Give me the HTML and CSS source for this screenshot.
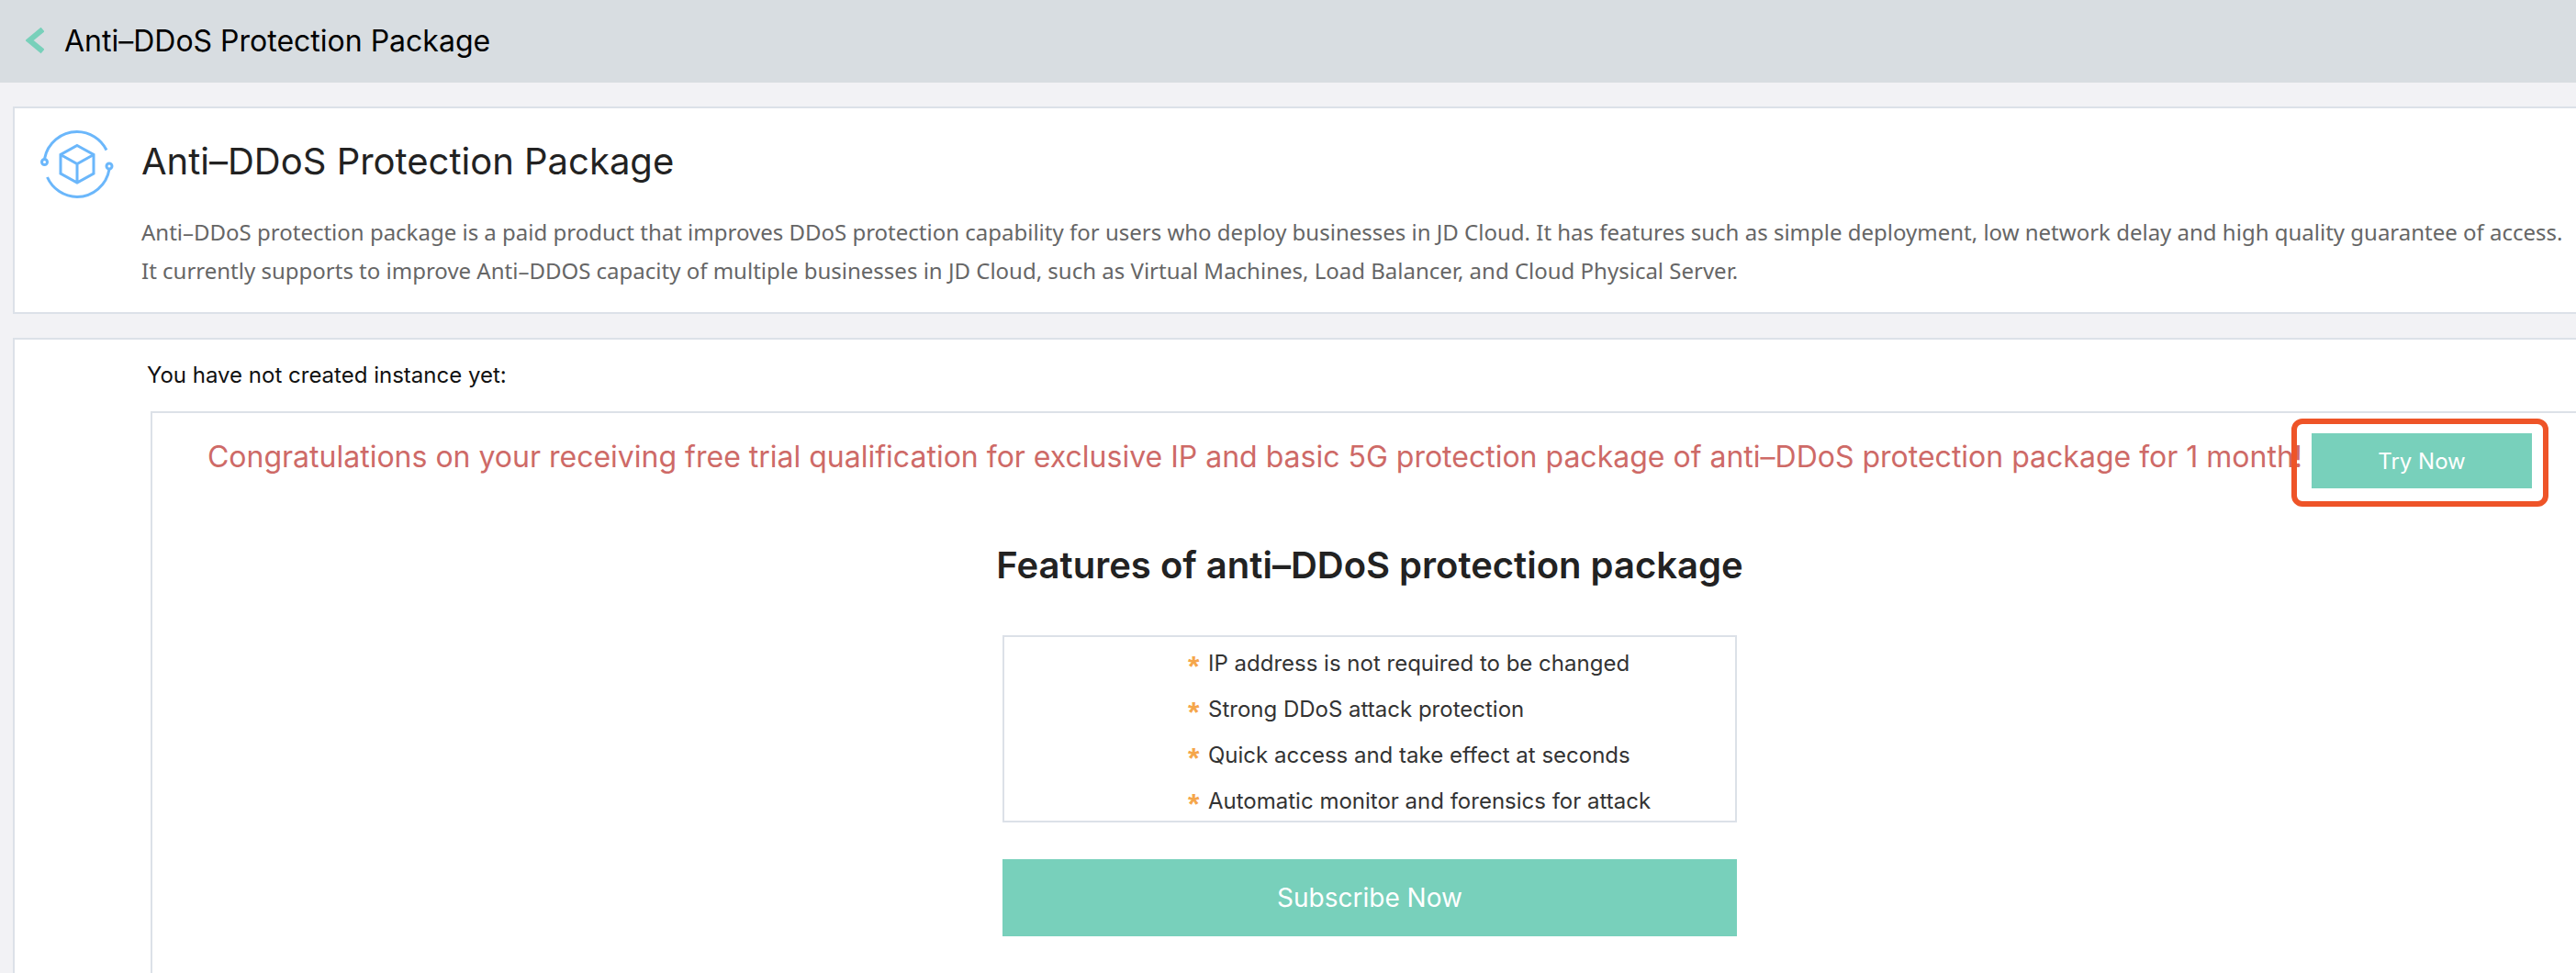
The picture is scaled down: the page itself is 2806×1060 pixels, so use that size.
FILE: index.html
```html
<!DOCTYPE html>
<html lang="en">
<head>
<meta charset="utf-8">
<title>Anti–DDoS Protection Package</title>
<link rel="stylesheet" href="styles.css">
</head>
<body>
<header class="topbar">
  <a class="back" href="#" aria-label="Back">
    <svg width="20" height="30" viewBox="0 0 20 30" fill="none" stroke="#78d0ba" stroke-width="6"><path d="M18.500 2 4 14 18.500 26"/></svg>
  </a>
  <span class="topbar-title">Anti–DDoS Protection Package</span>
</header>
<main class="content">
  <section class="card intro">
    <svg class="intro-icon" width="80" height="74" viewBox="0 0 80 74" fill="none" stroke="#6bb7fb" stroke-width="3">
      <path d="M4.500 31A36 36 0 0 1 40 1.500A36 36 0 0 1 72 21.500"/>
      <path d="M7.500 51A36 36 0 0 0 40 72.500A36 36 0 0 0 75 42.500"/>
      <circle cx="4.500" cy="34.500" r="3"/>
      <circle cx="75" cy="39" r="3"/>
      <path d="M40 16.500 58 26.500V47L40 57 22 47V26.500ZM22 26.500 40 36.500 58 26.500M40 36.500V57"/>
    </svg>
    <div class="intro-body">
      <h1 class="intro-title">Anti–DDoS Protection Package</h1>
      <p class="intro-text">Anti–DDoS protection package is a paid product that improves DDoS protection capability for users who deploy businesses in JD Cloud. It has features such as simple deployment, low network delay and high quality guarantee of access.<br>It currently supports to improve Anti–DDOS capacity of multiple businesses in JD Cloud, such as Virtual Machines, Load Balancer, and Cloud Physical Server.</p>
    </div>
  </section>
  <section class="card instances">
    <p class="empty-note">You have not created instance yet:</p>
    <div class="offer">
      <div class="trial">
        <p class="trial-text">Congratulations on your receiving free trial qualification for exclusive IP and basic 5G protection package of anti–DDoS protection package for 1 month!</p>
        <div class="trial-action">
          <button class="button try" type="button">Try Now</button>
        </div>
      </div>
      <h2 class="features-title">Features of anti–DDoS protection package</h2>
      <ul class="features">
        <li><span class="star">*</span>IP address is not required to be changed</li>
        <li><span class="star">*</span>Strong DDoS attack protection</li>
        <li><span class="star">*</span>Quick access and take effect at seconds</li>
        <li><span class="star">*</span>Automatic monitor and forensics for attack</li>
      </ul>
      <button class="button subscribe" type="button">Subscribe Now</button>
    </div>
  </section>
</main>
</body>
</html>
```
FILE: styles.css
```css
* { box-sizing: border-box; }

body {
  margin: 0;
  min-height: 100vh;
  display: flex;
  flex-direction: column;
  background: #f2f2f5;
  color: #222;
  font: 24px/42px Inter, "Liberation Sans", sans-serif;
  overflow-x: hidden;
}

h1, h2, p, ul { margin: 0; padding: 0; }

.topbar {
  display: flex;
  align-items: center;
  gap: 22px;
  height: 90px;
  padding-left: 28px;
  background: #d8dde1;
  color: #000;
}

.back { display: flex; }

.topbar-title { font-size: 32px; }

.content {
  flex: 1;
  display: flex;
  flex-direction: column;
  gap: 26px;
  padding: 26px 0 0 14px;
}

.card {
  border: 2px solid #dce1e8;
  border-right: 0;
  background: #fff;
  overflow: hidden;
}

.intro {
  display: flex;
  align-items: flex-start;
  gap: 30px;
  padding: 24px 0 24px 28px;
}

.intro-icon { flex: none; }

.intro-body { padding-top: 6px; }

.intro-title {
  font-size: 40px;
  font-weight: 400;
  line-height: 56px;
}

.intro-text {
  margin-top: 28px;
  color: #666;
  font-family: "Noto Sans", sans-serif;
  white-space: nowrap;
}

.instances {
  flex: 1;
  display: flex;
  flex-direction: column;
  gap: 18px;
  padding: 18px 0 0 144px;
  border-bottom: 0;
}

.empty-note { color: #111; }

.offer {
  flex: 1;
  display: flex;
  flex-direction: column;
  align-items: center;
  margin: 0 -14px 0 4px;
  padding: 22px 0 40px;
  border: 2px solid #dce1e8;
  border-bottom: 0;
}

.trial {
  display: flex;
  align-items: flex-start;
  gap: 10px;
}

.trial-text {
  color: #ce6a67;
  font-size: 32px;
  line-height: 52px;
  white-space: nowrap;
}

.trial-action {
  position: relative;
  flex: none;
}

/* highlight frame around the trial button */
.trial-action::after {
  content: "";
  position: absolute;
  inset: -16px -18px -20px -22px;
  border: 6px solid #ee5428;
  border-radius: 12px;
  pointer-events: none;
}

.button {
  display: block;
  border: 0;
  padding: 0;
  background: #78d0bb;
  color: #fff;
  font-family: inherit;
}

.try {
  width: 240px;
  height: 60px;
  font-size: 24px;
}

.features-title {
  margin-top: 56px;
  font-size: 40px;
  font-weight: 600;
  line-height: 56px;
}

.features {
  display: flex;
  flex-direction: column;
  gap: 8px;
  width: 800px;
  margin-top: 48px;
  padding: 8px 0 0 200px;
  border: 2px solid #dce1e8;
  color: #333;
  list-style: none;
}

.features li {
  display: flex;
  gap: 8px;
  height: 42px;
}

.star {
  width: 14px;
  color: #f5a64b;
  font: bold 32px/48px "Liberation Sans", sans-serif;
}

.subscribe {
  width: 800px;
  height: 84px;
  margin-top: 40px;
  font-size: 28px;
}
```
